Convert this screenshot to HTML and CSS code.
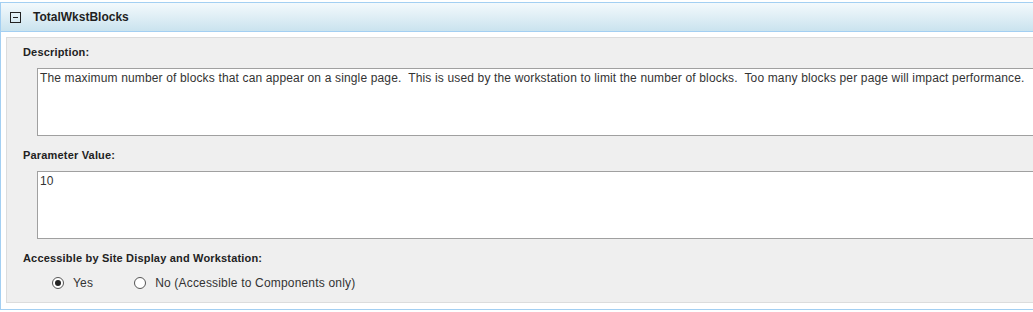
FILE: index.html
```html
<!DOCTYPE html>
<html>
<head>
<meta charset="utf-8">
<link rel="stylesheet" href="styles.css">
</head>
<body>
<div class="frame">
  <div class="head">
    <span class="toggle"></span>
    <span class="title">TotalWkstBlocks</span>
  </div>
  <div class="body">
    <div class="panel">
      <div class="label">Description:</div>
      <textarea class="field" readonly>The maximum number of blocks that can appear on a single page.  This is used by the workstation to limit the number of blocks.  Too many blocks per page will impact performance.</textarea>
      <div class="label gap">Parameter Value:</div>
      <textarea class="field" readonly>10</textarea>
      <div class="label gap2">Accessible by Site Display and Workstation:</div>
      <div class="radios">
        <label class="radio"><span class="dot on"></span>Yes</label>
        <label class="radio"><span class="dot"></span>No (Accessible to Components only)</label>
      </div>
    </div>
  </div>
</div>
</body>
</html>
```
FILE: styles.css
```css
html, body {
  margin: 0;
  padding: 0;
  background: #fff;
  overflow: hidden;
}
body {
  padding-top: 2px;
  font-family: "Liberation Sans", Arial, sans-serif;
}
.frame {
  width: 1100px;
  border: 1px solid #a3cff2;
}
.head {
  height: 28px;
  display: flex;
  align-items: center;
  padding-left: 9px;
  background: linear-gradient(#f3f9fc, #cae3ee);
  border-bottom: 1px solid #a3cff2;
}
.toggle {
  width: 9px;
  height: 9px;
  border: 1px solid #222;
  position: relative;
  margin-top: 1px;
}
.toggle::after {
  content: "";
  position: absolute;
  left: 2px;
  right: 2px;
  top: 4px;
  height: 1px;
  background: #222;
}
.title {
  margin-left: 12px;
  font-weight: bold;
  font-size: 12px;
  color: #1f1f1f;
}
.body {
  padding: 5px 0 6px 5px;
}
.panel {
  background: #efefef;
  border: 1px solid #dcdcdc;
  padding: 8px 0 12px 16px;
}
.label {
  font-size: 11px;
  line-height: 13px;
  font-weight: bold;
  color: #222;
  letter-spacing: 0.18px;
}
.gap { margin-top: 13px; }
.gap2 { margin-top: 13px; }
.field {
  display: block;
  box-sizing: border-box;
  width: 1060px;
  height: 68px;
  margin: 9px 0 0 14px;
  padding: 2px 2px;
  border: 1px solid #a0a0a0;
  background: #fff;
  resize: none;
  font-family: "Liberation Sans", Arial, sans-serif;
  font-size: 12px;
  line-height: 14px;
  letter-spacing: 0.15px;
  color: #333;
  outline: none;
  overflow: hidden;
}
.radios {
  display: flex;
  margin: 11px 0 0 29px;
}
.radio {
  display: flex;
  align-items: center;
  font-size: 12px;
  line-height: 14px;
  letter-spacing: 0.18px;
  color: #333;
  margin-right: 41px;
}
.dot {
  box-sizing: border-box;
  width: 12px;
  height: 12px;
  border: 1px solid #555;
  border-radius: 50%;
  background: #fff;
  margin-right: 9px;
  display: flex;
  align-items: center;
  justify-content: center;
}
.dot.on::after {
  content: "";
  width: 6px;
  height: 6px;
  border-radius: 50%;
  background: #222;
}
```
